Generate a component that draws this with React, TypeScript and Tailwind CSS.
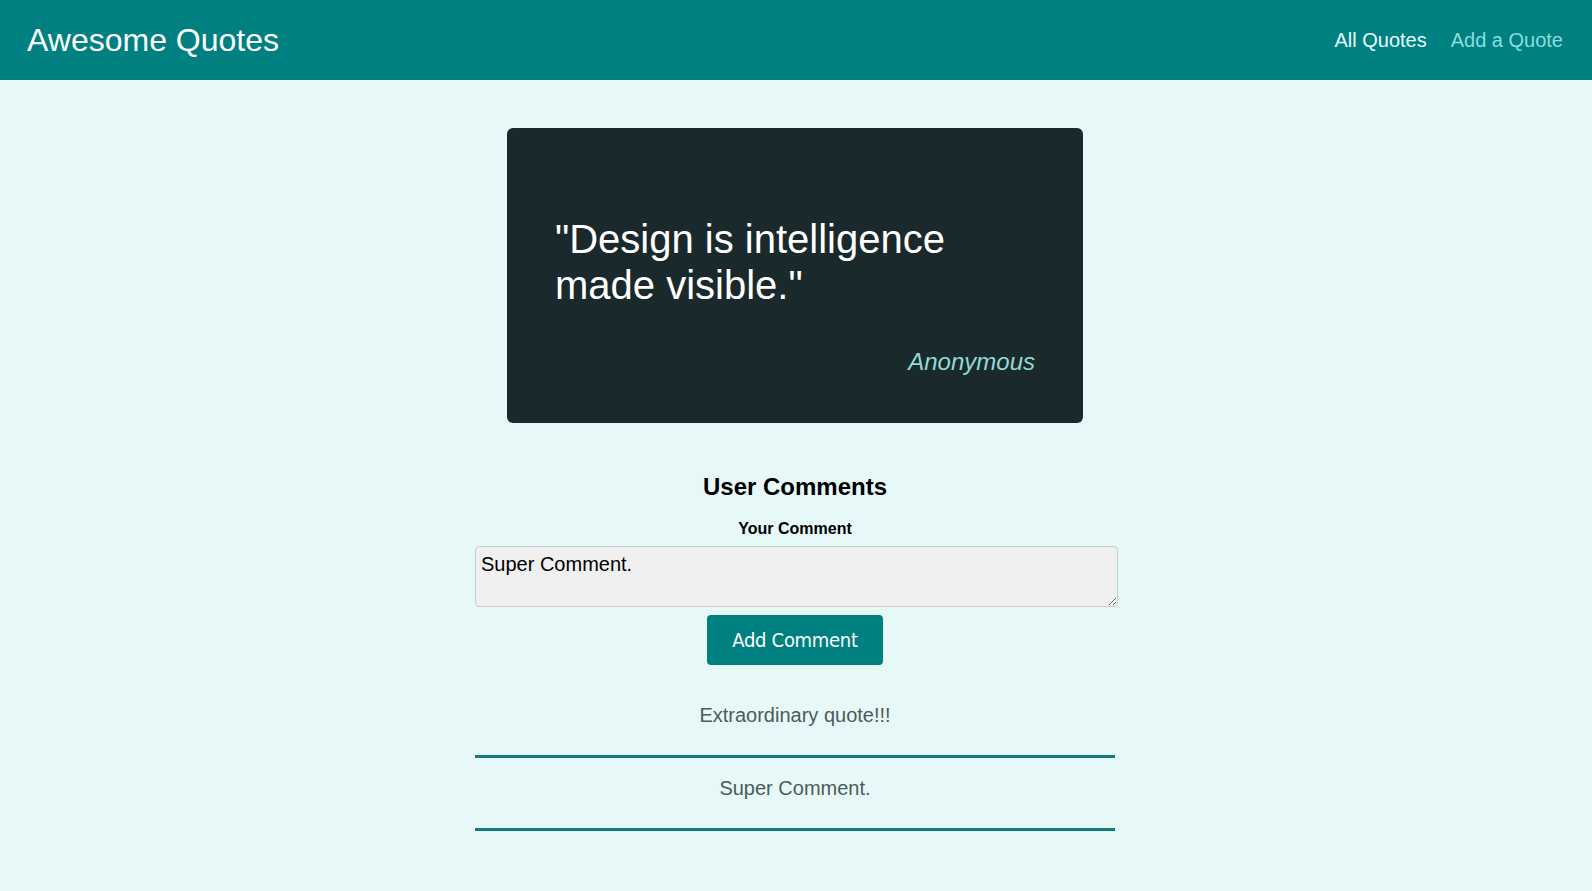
export default function App() {
    const comments = ['Extraordinary quote!!!', 'Super Comment.'];

    return (
        <div className="min-h-screen bg-[#e6f8f8] font-['Liberation_Sans',Arial,sans-serif]">
            {/* Header */}
            <header className="h-[80px] bg-[#008080] flex items-center justify-between pl-[27px] pr-[29px]">
                <div className="text-[32px] leading-[37px] text-white">Awesome Quotes</div>
                <nav>
                    <ul className="flex gap-[24px] text-[20px] leading-[23px]">
                        <li className="text-[#e6fcfc]">All Quotes</li>
                        <li className="text-[#88dfdf]">Add a Quote</li>
                    </ul>
                </nav>
            </header>

            <main className="flex flex-col items-center pr-[2px]">
                <figure className="w-[576px] mt-[48px] bg-[#1a292b] rounded-[6px] p-[48px] text-white">
                    <p className="my-[40px] text-[40px] leading-[46px]">"Design is intelligence made visible."</p>
                    <figcaption className="text-right italic text-[24px] leading-[27px] text-[#94d8d8]">Anonymous</figcaption>
                </figure>

                <section className="w-[640px] mt-[50px] flex flex-col items-center">
                    <h2 className="text-[24px] leading-[28px] font-bold text-black">User Comments</h2>

                    <form className="w-full flex flex-col items-center">
                        <label className="mt-[19px] text-[16px] leading-[18px] font-bold text-black">Your Comment</label>
                        <textarea
                            defaultValue="Super Comment."
                            className="mt-[8px] self-start w-[643px] h-[61px] bg-[#f0f0f0] border border-[#c8cccc] rounded-[4px] px-[5px] pt-[6px] text-[20px] leading-[23px] text-black font-['Liberation_Sans',Arial,sans-serif] outline-none"
                        />
                        <button
                            type="button"
                            className="mt-[8px] h-[50px] px-[25px] bg-[#008080] text-white rounded-[4px] text-[20px] tracking-[-0.3px] font-['DejaVu_Sans_Condensed','DejaVu_Sans',sans-serif]"
                        >
                            Add Comment
                        </button>
                    </form>

                    <ul className="w-full mt-[20px]">
                        {comments.map((c) => (
                            <li key={c} className="pt-[19px] pb-[28px] border-b-[3px] border-[#107c7c] text-center">
                                <p className="text-[20px] leading-[23px] text-[#4d5b5b]">{c}</p>
                            </li>
                        ))}
                    </ul>
                </section>
            </main>
        </div>
    );
}
